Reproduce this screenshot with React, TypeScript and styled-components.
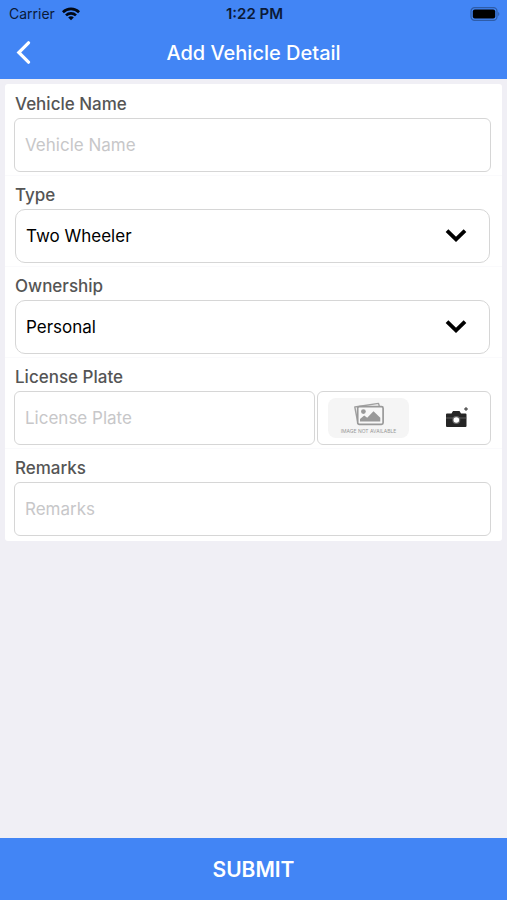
import React from "react";
import styled, { createGlobalStyle } from "styled-components";

const GlobalStyle = createGlobalStyle`
  *, *::before, *::after { box-sizing: border-box; }
  body {
    margin: 0;
    background: #f0eff5;
    font-family: Inter, "Liberation Sans", sans-serif;
  }
  button, input, select { font-family: inherit; }
`;

const Screen = styled.div`
  display: flex;
  flex-direction: column;
  min-height: 100vh;
`;

const Header = styled.header`
  background: #4285f5;
`;

const StatusBar = styled.div`
  display: grid;
  grid-template-columns: 1fr auto 1fr;
  align-items: center;
  height: 27px;
  padding: 0 7px 0 9px;
  color: #0b1a38;
  font-size: 14px;
  line-height: 20px;
`;

const Carrier = styled.div`
  display: flex;
  align-items: center;
  gap: 7px;
`;

const Clock = styled.time`
  font-size: 15px;
  font-weight: 600;
`;

const BatterySlot = styled.div`
  display: flex;
  justify-content: flex-end;
`;

const NavBar = styled.div`
  display: grid;
  grid-template-columns: 48px 1fr 48px;
  align-items: center;
  height: 52px;
`;

const BackButton = styled.button`
  display: flex;
  align-items: center;
  height: 48px;
  padding: 0 0 0 16px;
  border: 0;
  background: none;
  color: #fff;
  cursor: pointer;
`;

const Title = styled.h1`
  margin: 0;
  color: #fff;
  font-size: 20px;
  font-weight: 500;
  line-height: 24px;
  text-align: center;
`;

const Form = styled.form`
  display: flex;
  flex: 1;
  flex-direction: column;
  justify-content: space-between;
`;

const Card = styled.div`
  margin: 5px 5px 24px;
  padding: 1px 0;
  border-radius: 3px;
  background: #fff;
`;

const Field = styled.div`
  display: flex;
  flex-direction: column;
  gap: 4px;
  padding: 9px 11px 4px 9px;
  border-bottom: 1px solid #fafafc;

  &:last-child { border-bottom-color: transparent; }
`;

const Label = styled.label`
  padding-left: 1px;
  color: #555;
  font-size: 17px;
  font-weight: 500;
  line-height: 20px;
`;

const TextInput = styled.input`
  flex: 1;
  width: 100%;
  min-width: 0;
  height: 54px;
  min-height: 54px;
  margin-bottom: -1px;
  padding: 0 10px;
  border: 1px solid #d6d6d6;
  border-radius: 6px;
  background: #fff;
  color: #000;
  font-size: 17px;

  &::placeholder { color: #c7c7c9; opacity: 1; }
`;

const SelectBox = styled.div`
  display: grid;
  grid-template-columns: 1fr 68px;
  align-items: center;
  height: 53px;
  margin: 0 1px;

  > * { grid-row: 1; }
`;

const Select = styled.select`
  grid-column: 1 / -1;
  width: 100%;
  height: 54px;
  padding: 0 68px 0 10px;
  appearance: none;
  border: 1px solid #d6d6d6;
  border-radius: 10px;
  background: #fff;
  color: #000;
  font-size: 17px;
`;

const Chevron = styled.svg`
  grid-column: 2;
  justify-self: center;
  pointer-events: none;
`;

const PlateRow = styled.div`
  display: grid;
  grid-template-columns: 301fr 174fr;
  gap: 2px;
`;

const PhotoBox = styled.div`
  display: flex;
  align-items: center;
  justify-content: space-between;
  height: 54px;
  margin-bottom: -1px;
  padding: 0 16px 0 10px;
  border: 1px solid #d6d6d6;
  border-radius: 6px;
`;

const Preview = styled.div`
  display: flex;
  flex-direction: column;
  align-items: center;
  gap: 2px;
  width: 81px;
  height: 40px;
  padding-top: 4px;
  border-radius: 8px;
  background: #f5f5f5;
  color: #999;
  font-size: 5px;
  line-height: 6px;
  white-space: nowrap;
`;

const CameraButton = styled.button`
  display: flex;
  align-items: center;
  justify-content: center;
  width: 36px;
  height: 40px;
  padding: 0;
  border: 0;
  background: none;
  cursor: pointer;
`;

const SubmitButton = styled.button`
  height: 62px;
  padding: 2px 0 0;
  border: 0;
  background: #4285f5;
  color: #fff;
  font-size: 21px;
  font-weight: 600;
  line-height: 24px;
  cursor: pointer;
`;

function WifiIcon() {
  return (
    <svg width="18" height="14" viewBox="0 0 18 14" fill="none" stroke="#020814" strokeWidth="2.7" aria-hidden="true">
      <path d="M0.9 5.2C5.4 0.7 12.6 0.7 17.1 5.2" />
      <path d="M4 8.4C6.8 5.7 11.2 5.7 14 8.4" />
      <path d="M6.2 10.4C7.8 8.9 10.2 8.9 11.8 10.4L9 13.3Z" fill="#020814" stroke="none" />
    </svg>
  );
}

function BatteryIcon() {
  return (
    <svg width="30" height="14" viewBox="0 0 30 14" aria-hidden="true">
      <rect x="1" y="0.7" width="26" height="12.6" rx="3.6" fill="none" stroke="#2e5ca8" strokeWidth="1.2" />
      <rect x="2.8" y="2.5" width="22.4" height="9" rx="2" fill="#000" />
      <path d="M28.2 5v4c1.5-.7 1.5-3.3 0-4Z" fill="#2e5ca8" />
    </svg>
  );
}

function BackIcon() {
  return (
    <svg width="16" height="24" viewBox="0 0 16 24" fill="none" stroke="currentColor" strokeWidth="3.2" strokeLinecap="round" aria-hidden="true">
      <path d="M12.5 1.8L2.8 11.5L12.5 21.2" strokeLinejoin="miter" />
    </svg>
  );
}

function ChevronIcon() {
  return (
    <Chevron width="22" height="14" viewBox="0 0 22 14" fill="none" stroke="#000" strokeWidth="3.8" aria-hidden="true">
      <path d="M2 1.6L11 10.4L20 1.6" />
    </Chevron>
  );
}

function PicturesIcon() {
  return (
    <svg width="32" height="24" viewBox="0 0 32 24" aria-hidden="true">
      <path d="M4.8 20.5L1.8 5L25.5 1.4L26.3 4" fill="none" stroke="#a0a0a0" strokeWidth="1.4" strokeLinejoin="round" />
      <rect x="4.7" y="4.6" width="25.4" height="17.8" rx="1.6" fill="#f7f7f7" stroke="#999" strokeWidth="1.7" />
      <circle cx="10.4" cy="9.6" r="2.4" fill="#999" />
      <path d="M7 19.4v-2.5l4.2-3.3 3 2.2 6.3-6.6 6.8 6.5v3.7Z" fill="#999" />
    </svg>
  );
}

function CameraIcon() {
  return (
    <svg width="24" height="24" viewBox="0 0 24 24" aria-hidden="true">
      <path d="M3 7.5h4.5L9 5h6.5L17 7.5h4.5q1 0 1 1V20q0 1-1 1H3q-1 0-1-1V8.500q0-1 1-1Z" fill="#252525" />
      <path d="M2 12h20.500" stroke="#777" strokeWidth="0.7" />
      <circle cx="12.300" cy="14" r="4" fill="#666" />
      <circle cx="12.300" cy="14" r="2.800" fill="#fff" />
      <path d="M22 1.200v3.600M20.200 3h3.600" stroke="#555" strokeWidth="1.5" />
    </svg>
  );
}

export default function App() {
  return (
    <Screen>
      <GlobalStyle />
      <Header>
        <StatusBar>
          <Carrier>
            <span>Carrier</span>
            <WifiIcon />
          </Carrier>
          <Clock>1:22 PM</Clock>
          <BatterySlot>
            <BatteryIcon />
          </BatterySlot>
        </StatusBar>
        <NavBar>
          <BackButton type="button" aria-label="Back">
            <BackIcon />
          </BackButton>
          <Title>Add Vehicle Detail</Title>
        </NavBar>
      </Header>
      <Form onSubmit={(event) => event.preventDefault()}>
        <Card>
          <Field>
            <Label htmlFor="vehicle-name">Vehicle Name</Label>
            <TextInput id="vehicle-name" placeholder="Vehicle Name" />
          </Field>
          <Field>
            <Label htmlFor="type">Type</Label>
            <SelectBox>
              <Select id="type" defaultValue="Two Wheeler">
                <option>Two Wheeler</option>
              </Select>
              <ChevronIcon />
            </SelectBox>
          </Field>
          <Field>
            <Label htmlFor="ownership">Ownership</Label>
            <SelectBox>
              <Select id="ownership" defaultValue="Personal">
                <option>Personal</option>
              </Select>
              <ChevronIcon />
            </SelectBox>
          </Field>
          <Field>
            <Label htmlFor="license-plate">License Plate</Label>
            <PlateRow>
              <TextInput id="license-plate" placeholder="License Plate" />
              <PhotoBox>
                <Preview>
                  <PicturesIcon />
                  <span>IMAGE NOT AVAILABLE</span>
                </Preview>
                <CameraButton type="button" aria-label="Take photo">
                  <CameraIcon />
                </CameraButton>
              </PhotoBox>
            </PlateRow>
          </Field>
          <Field>
            <Label htmlFor="remarks">Remarks</Label>
            <TextInput id="remarks" placeholder="Remarks" />
          </Field>
        </Card>
        <SubmitButton type="submit">SUBMIT</SubmitButton>
      </Form>
    </Screen>
  );
}
